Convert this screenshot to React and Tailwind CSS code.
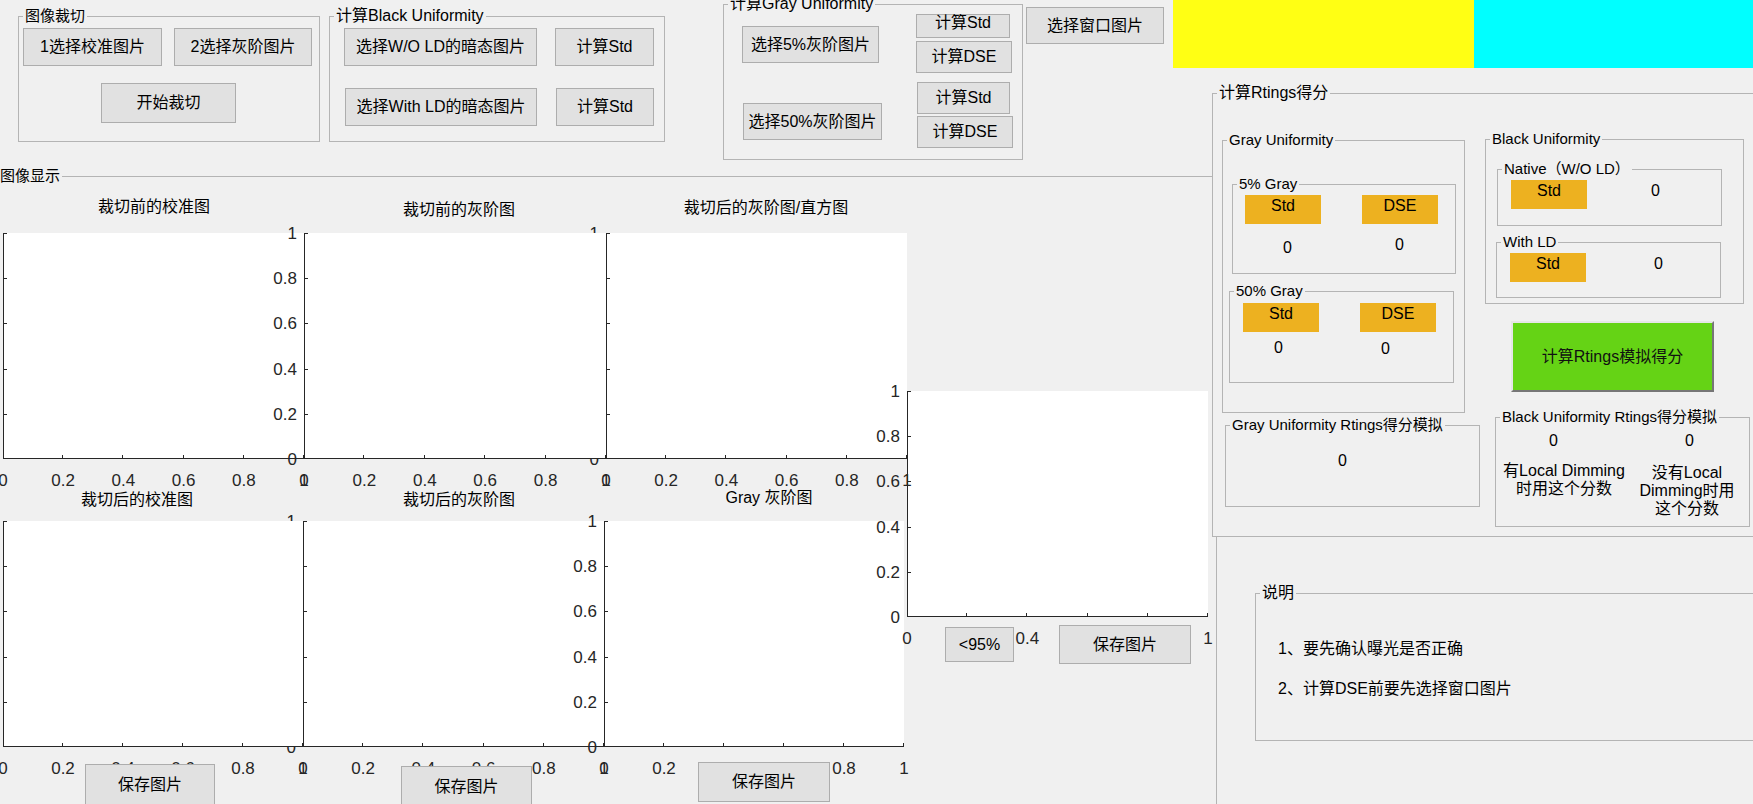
import React from "react"

const TICKS = [0, 0.2, 0.4, 0.6, 0.8, 1]

const Btn = ({ className = "", children }) => (
    <div className={`flex shrink-0 items-center justify-center whitespace-nowrap border border-[#adadad] bg-[#e1e1e1] text-[16px] leading-none text-black ${className}`}>{children}</div>
)

const Panel = ({ title, className = "", children }) => (
    <div className={`relative shrink-0 border border-[#b4b4b4] ${className}`}>
        <span className="absolute left-[4px] top-[-10px] whitespace-nowrap bg-[#f0f0f0] px-[2px] leading-[18px]">{title}</span>
        {children}
    </div>
)

const Tag = ({ children }) => (
    <div className="h-[29px] w-[76px] shrink-0 bg-[#edb120] text-center text-[16px] leading-[22px]">{children}</div>
)

const Zero = ({ className = "" }) => (
    <div className={`w-fit text-[16px] leading-[18px] ${className}`}>0</div>
)

// one matlab axes: white box, left + bottom axis, ticks inside
const Axes = ({ x, y, w, h }) => {
    const xt = [1, 2, 3, 4, 5].map(k => Math.round(k * w / 5) - 0.5)
    const yt = [1, 2, 3, 4, 5].map(k => Math.round(h - k * h / 5) + 0.5)
    return (
        <div className="absolute bg-white" style={{ left: x, top: y, width: w, height: h }}>
            <svg width={w} height={h} className="absolute left-0 top-0 overflow-visible">
                <g stroke="#262626" strokeWidth="1" shapeRendering="crispEdges">
                    <line x1="0.5" y1="0" x2="0.5" y2={h} />
                    <line x1="0" y1={h - 0.5} x2={w} y2={h - 0.5} />
                    {xt.map(t => <line key={"x" + t} x1={t} y1={h - 1} x2={t} y2={h - 4} />)}
                    {yt.map(t => <line key={"y" + t} x1="1" y1={t} x2="4" y2={t} />)}
                </g>
            </svg>
        </div>
    )
}

const YLabels = ({ x, y, h }) => (
    <>
        {TICKS.map(v => (
            <span key={v} className="absolute -translate-x-full -translate-y-1/2 text-[17px] leading-none text-[#262626]" style={{ left: x - 7, top: y + h - v * h }}>{v}</span>
        ))}
    </>
)

const XLabels = ({ x, y, w, h }) => (
    <>
        {TICKS.map(v => (
            <span key={v} className="absolute -translate-x-1/2 -translate-y-1/2 text-[17px] leading-none text-[#262626]" style={{ left: x + v * w, top: y + h + 21 }}>{v}</span>
        ))}
    </>
)

const Title = ({ x, y, children }) => (
    <span className="absolute -translate-x-1/2 -translate-y-1/2 whitespace-nowrap text-[16px] leading-none" style={{ left: x, top: y }}>{children}</span>
)

const A1 = { x: 3, y: 56, w: 301, h: 226 }
const A2 = { x: 304, y: 56, w: 302, h: 226 }
const A3 = { x: 606, y: 56, w: 301, h: 226 }
const B1 = { x: 3, y: 344, w: 300, h: 226 }
const B2 = { x: 303, y: 344, w: 301, h: 226 }
const B3 = { x: 604, y: 344, w: 300, h: 226 }
const C1 = { x: 907, y: 214, w: 301, h: 226 }

const App = () => {
    return (
        <div className="flex h-[804px] w-[1753px] overflow-hidden bg-[#f0f0f0] font-['Liberation_Sans','Noto_Sans_CJK_SC',sans-serif] text-black">
            <div className="flex w-[1173px] shrink-0 flex-col">
                {/* top controls */}
                <div className="flex h-[176px] shrink-0 items-start">
                    <Panel title="图像裁切" className="ml-[18px] mt-[16px] h-[126px] w-[302px] text-[15px]">
                        <div className="flex gap-[12px] pl-[4px] pt-[11px]">
                            <Btn className="h-[38px] w-[139px]">1选择校准图片</Btn>
                            <Btn className="h-[38px] w-[138px]">2选择灰阶图片</Btn>
                        </div>
                        <Btn className="ml-[82px] mt-[17px] h-[40px] w-[135px]">开始裁切</Btn>
                    </Panel>
                    <Panel title="计算Black Uniformity" className="ml-[9px] mt-[16px] h-[126px] w-[336px] text-[16px]">
                        <div className="flex gap-[18px] pl-[14px] pt-[11px]">
                            <Btn className="h-[38px] w-[193px]">选择W/O LD的暗态图片</Btn>
                            <Btn className="h-[38px] w-[99px]">计算Std</Btn>
                        </div>
                        <div className="mt-[22px] flex gap-[19px] pl-[15px]">
                            <Btn className="h-[38px] w-[192px]">选择With LD的暗态图片</Btn>
                            <Btn className="h-[38px] w-[98px]">计算Std</Btn>
                        </div>
                    </Panel>
                    <Panel title="计算Gray Uniformity" className="ml-[58px] mt-[4px] h-[156px] w-[300px] text-[16px]">
                        <div className="flex items-start">
                            <div className="w-[192px] shrink-0 pl-[18px] pt-[21px]">
                                <Btn className="h-[37px] w-[137px]">选择5%灰阶图片</Btn>
                                <Btn className="ml-[1px] mt-[40px] h-[37px] w-[139px]">选择50%灰阶图片</Btn>
                            </div>
                            <div className="flex flex-col pt-[9px]">
                                <Btn className="h-[24px] w-[94px] pb-[6px]">计算Std</Btn>
                                <Btn className="mt-[3px] h-[32px] w-[96px]">计算DSE</Btn>
                                <Btn className="ml-[1px] mt-[9px] h-[32px] w-[93px]">计算Std</Btn>
                                <Btn className="ml-[1px] mt-[2px] h-[32px] w-[96px]">计算DSE</Btn>
                            </div>
                        </div>
                    </Panel>
                    <Btn className="ml-[3px] mt-[7px] h-[37px] w-[138px]">选择窗口图片</Btn>
                </div>

                {/* image display */}
                <div className="relative h-[628px] w-[1213px] shrink-0 border-t border-[#b4b4b4]">
                    <span className="absolute left-0 top-[-10px] bg-[#f0f0f0] pr-[2px] text-[15px] leading-[18px]">图像显示</span>

                    <Axes {...A1} />
                    <YLabels {...A3} />
                    <Axes {...A2} />
                    <YLabels {...A2} />
                    <Axes {...A3} />

                    <YLabels {...B2} />
                    <Axes {...B1} />
                    <Axes {...B2} />
                    <YLabels {...B3} />
                    <Axes {...B3} />
                    <XLabels {...B1} />
                    <XLabels {...B2} />
                    <XLabels {...B3} />

                    <Axes {...C1} />
                    <YLabels {...C1} />
                    <XLabels {...C1} />

                    <XLabels {...A1} />
                    <XLabels {...A2} />
                    <XLabels {...A3} />

                    <Title x={154} y={30}>裁切前的校准图</Title>
                    <Title x={459} y={33}>裁切前的灰阶图</Title>
                    <Title x={766} y={31}>裁切后的灰阶图/直方图</Title>
                    <Title x={137} y={323}>裁切后的校准图</Title>
                    <Title x={459} y={323}>裁切后的灰阶图</Title>
                    <Title x={769} y={321}>Gray 灰阶图</Title>

                    <Btn className="absolute left-[85px] top-[587px] h-[41px] w-[130px]">保存图片</Btn>
                    <Btn className="absolute left-[401px] top-[589px] h-[41px] w-[131px]">保存图片</Btn>
                    <Btn className="absolute left-[698px] top-[585px] h-[40px] w-[132px]">保存图片</Btn>
                    <Btn className="absolute left-[945px] top-[450px] h-[35px] w-[69px]">&lt;95%</Btn>
                    <Btn className="absolute left-[1059px] top-[448px] h-[39px] w-[132px]">保存图片</Btn>
                </div>
            </div>

            <div className="flex w-[580px] shrink-0 flex-col">
                <div className="flex h-[68px] shrink-0">
                    <div className="w-[301px] bg-[#ffff14]" />
                    <div className="flex-1 bg-[#00ffff]" />
                </div>

                <Panel title="计算Rtings得分" className="ml-[39px] mt-[25px] h-[444px] w-[560px] text-[16px]">
                    <div className="flex items-start">
                        <div className="ml-[9px] flex shrink-0 flex-col">
                            <Panel title="Gray Uniformity" className="mt-[46px] h-[273px] w-[243px] text-[15px]">
                                <Panel title="5% Gray" className="ml-[9px] mt-[43px] h-[90px] w-[224px] text-[15px]">
                                    <div className="flex pl-[12px] pt-[10px]">
                                        <div className="w-[76px]"><Tag>Std</Tag><Zero className="ml-[38px] mt-[15px]" /></div>
                                        <div className="ml-[41px] w-[76px]"><Tag>DSE</Tag><Zero className="ml-[33px] mt-[12px]" /></div>
                                    </div>
                                </Panel>
                                <Panel title="50% Gray" className="ml-[6px] mt-[17px] h-[92px] w-[225px] text-[15px]">
                                    <div className="flex pl-[13px] pt-[11px]">
                                        <div className="w-[76px]"><Tag>Std</Tag><Zero className="ml-[31px] mt-[7px]" /></div>
                                        <div className="ml-[41px] w-[76px]"><Tag>DSE</Tag><Zero className="ml-[21px] mt-[8px]" /></div>
                                    </div>
                                </Panel>
                            </Panel>
                            <Panel title="Gray Uniformity Rtings得分模拟" className="ml-[3px] mt-[12px] h-[82px] w-[255px] text-[15px]">
                                <Zero className="ml-[112px] mt-[26px]" />
                            </Panel>
                        </div>

                        <div className="ml-[5px] flex shrink-0 flex-col">
                            <Panel title="Black Uniformity" className="mt-[45px] h-[165px] w-[259px] text-[15px]">
                                <Panel title="Native（W/O LD）" className="ml-[11px] mt-[29px] h-[57px] w-[225px] text-[15px]">
                                    <div className="flex items-start pl-[13px] pt-[10px]"><Tag>Std</Tag><Zero className="ml-[64px] mt-[2px]" /></div>
                                </Panel>
                                <Panel title="With LD" className="ml-[10px] mt-[16px] h-[56px] w-[225px] text-[15px]">
                                    <div className="flex items-start pl-[13px] pt-[10px]"><Tag>Std</Tag><Zero className="ml-[68px] mt-[2px]" /></div>
                                </Panel>
                            </Panel>
                            <div className="ml-[26px] mt-[17px] flex h-[71px] w-[203px] items-center justify-center border-2 border-b-[#767676] border-l-[#e6e6e6] border-r-[#767676] border-t-[#e6e6e6] bg-[#65d315] text-[16px] text-[#111]">
                                计算Rtings模拟得分
                            </div>
                            <Panel title="Black Uniformity Rtings得分模拟" className="ml-[10px] mt-[25px] h-[110px] w-[255px] text-[15px]">
                                <div className="flex items-start text-[16px] leading-[18px]">
                                    <div className="ml-[3px] w-[130px]">
                                        <Zero className="ml-[50px] mt-[14px]" />
                                        <div className="mt-[12px] text-center">有Local Dimming<br />时用这个分数</div>
                                    </div>
                                    <div className="ml-[8px] w-[100px]">
                                        <Zero className="ml-[48px] mt-[14px]" />
                                        <div className="mt-[14px] text-center">没有Local<br />Dimming时用<br />这个分数</div>
                                    </div>
                                </div>
                            </Panel>
                        </div>
                    </div>
                </Panel>

                <div className="ml-[43px] flex-1 border-l border-[#b4b4b4]">
                    <Panel title="说明" className="ml-[38px] mt-[56px] h-[148px] w-[520px] text-[16px]">
                        <div className="pl-[22px] pt-[46px] leading-[18px]">
                            <div>1、要先确认曝光是否正确</div>
                            <div className="mt-[22px]">2、计算DSE前要先选择窗口图片</div>
                        </div>
                    </Panel>
                </div>
            </div>
        </div>
    )
}

export default App
